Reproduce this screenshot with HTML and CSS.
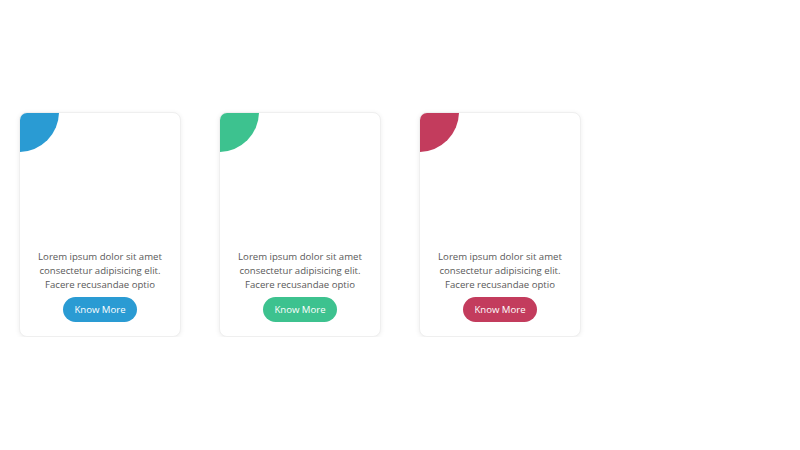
FILE: index.html
```html
<!DOCTYPE html>
<html>
<head>
<meta charset="utf-8">
<link rel="stylesheet" href="styles.css">
</head>
<body>
<div class="cards">
  <div class="card blue">
    <div class="corner"></div>
    <div class="content">
      <p class="text">Lorem ipsum dolor sit amet consectetur adipisicing elit. Facere recusandae optio</p>
      <a class="btn">Know More</a>
    </div>
  </div>
  <div class="card green">
    <div class="corner"></div>
    <div class="content">
      <p class="text">Lorem ipsum dolor sit amet consectetur adipisicing elit. Facere recusandae optio</p>
      <a class="btn">Know More</a>
    </div>
  </div>
  <div class="card red">
    <div class="corner"></div>
    <div class="content">
      <p class="text">Lorem ipsum dolor sit amet consectetur adipisicing elit. Facere recusandae optio</p>
      <a class="btn">Know More</a>
    </div>
  </div>
</div>
</body>
</html>
```
FILE: styles.css
```css
html, body {
  margin: 0;
  padding: 0;
  background: #fff;
  font-family: "Open Sans", "DejaVu Sans", sans-serif;
}
.cards {
  display: flex;
  gap: 38px;
  padding: 112px 0 0 19px;
}
.card {
  width: 162px;
  height: 225px;
  box-sizing: border-box;
  border: 1px solid #efefef;
  border-radius: 8px;
  box-shadow: 0 1px 5px rgba(0,0,0,0.07);
  display: flex;
  flex-direction: column;
  justify-content: space-between;
  overflow: hidden;
  background: #fff;
}
.corner {
  width: 40px;
  height: 40px;
  border-bottom-right-radius: 100%;
  margin: -1px 0 0 -1px;
}
.content {
  display: flex;
  flex-direction: column;
  align-items: center;
  padding: 0 10px 14px;
}
.text {
  margin: 0 0 5px;
  font-size: 9.6px;
  line-height: 14px;
  color: #5a5a5a;
  text-align: center;
}
.btn {
  display: flex;
  align-items: center;
  justify-content: center;
  width: 74px;
  height: 25px;
  border-radius: 13px;
  color: #fff;
  font-size: 9.6px;
}
.blue .corner, .blue .btn { background: #2a9bd3; }
.green .corner, .green .btn { background: #3dc28f; }
.red .corner, .red .btn { background: #c33c5d; }
```
